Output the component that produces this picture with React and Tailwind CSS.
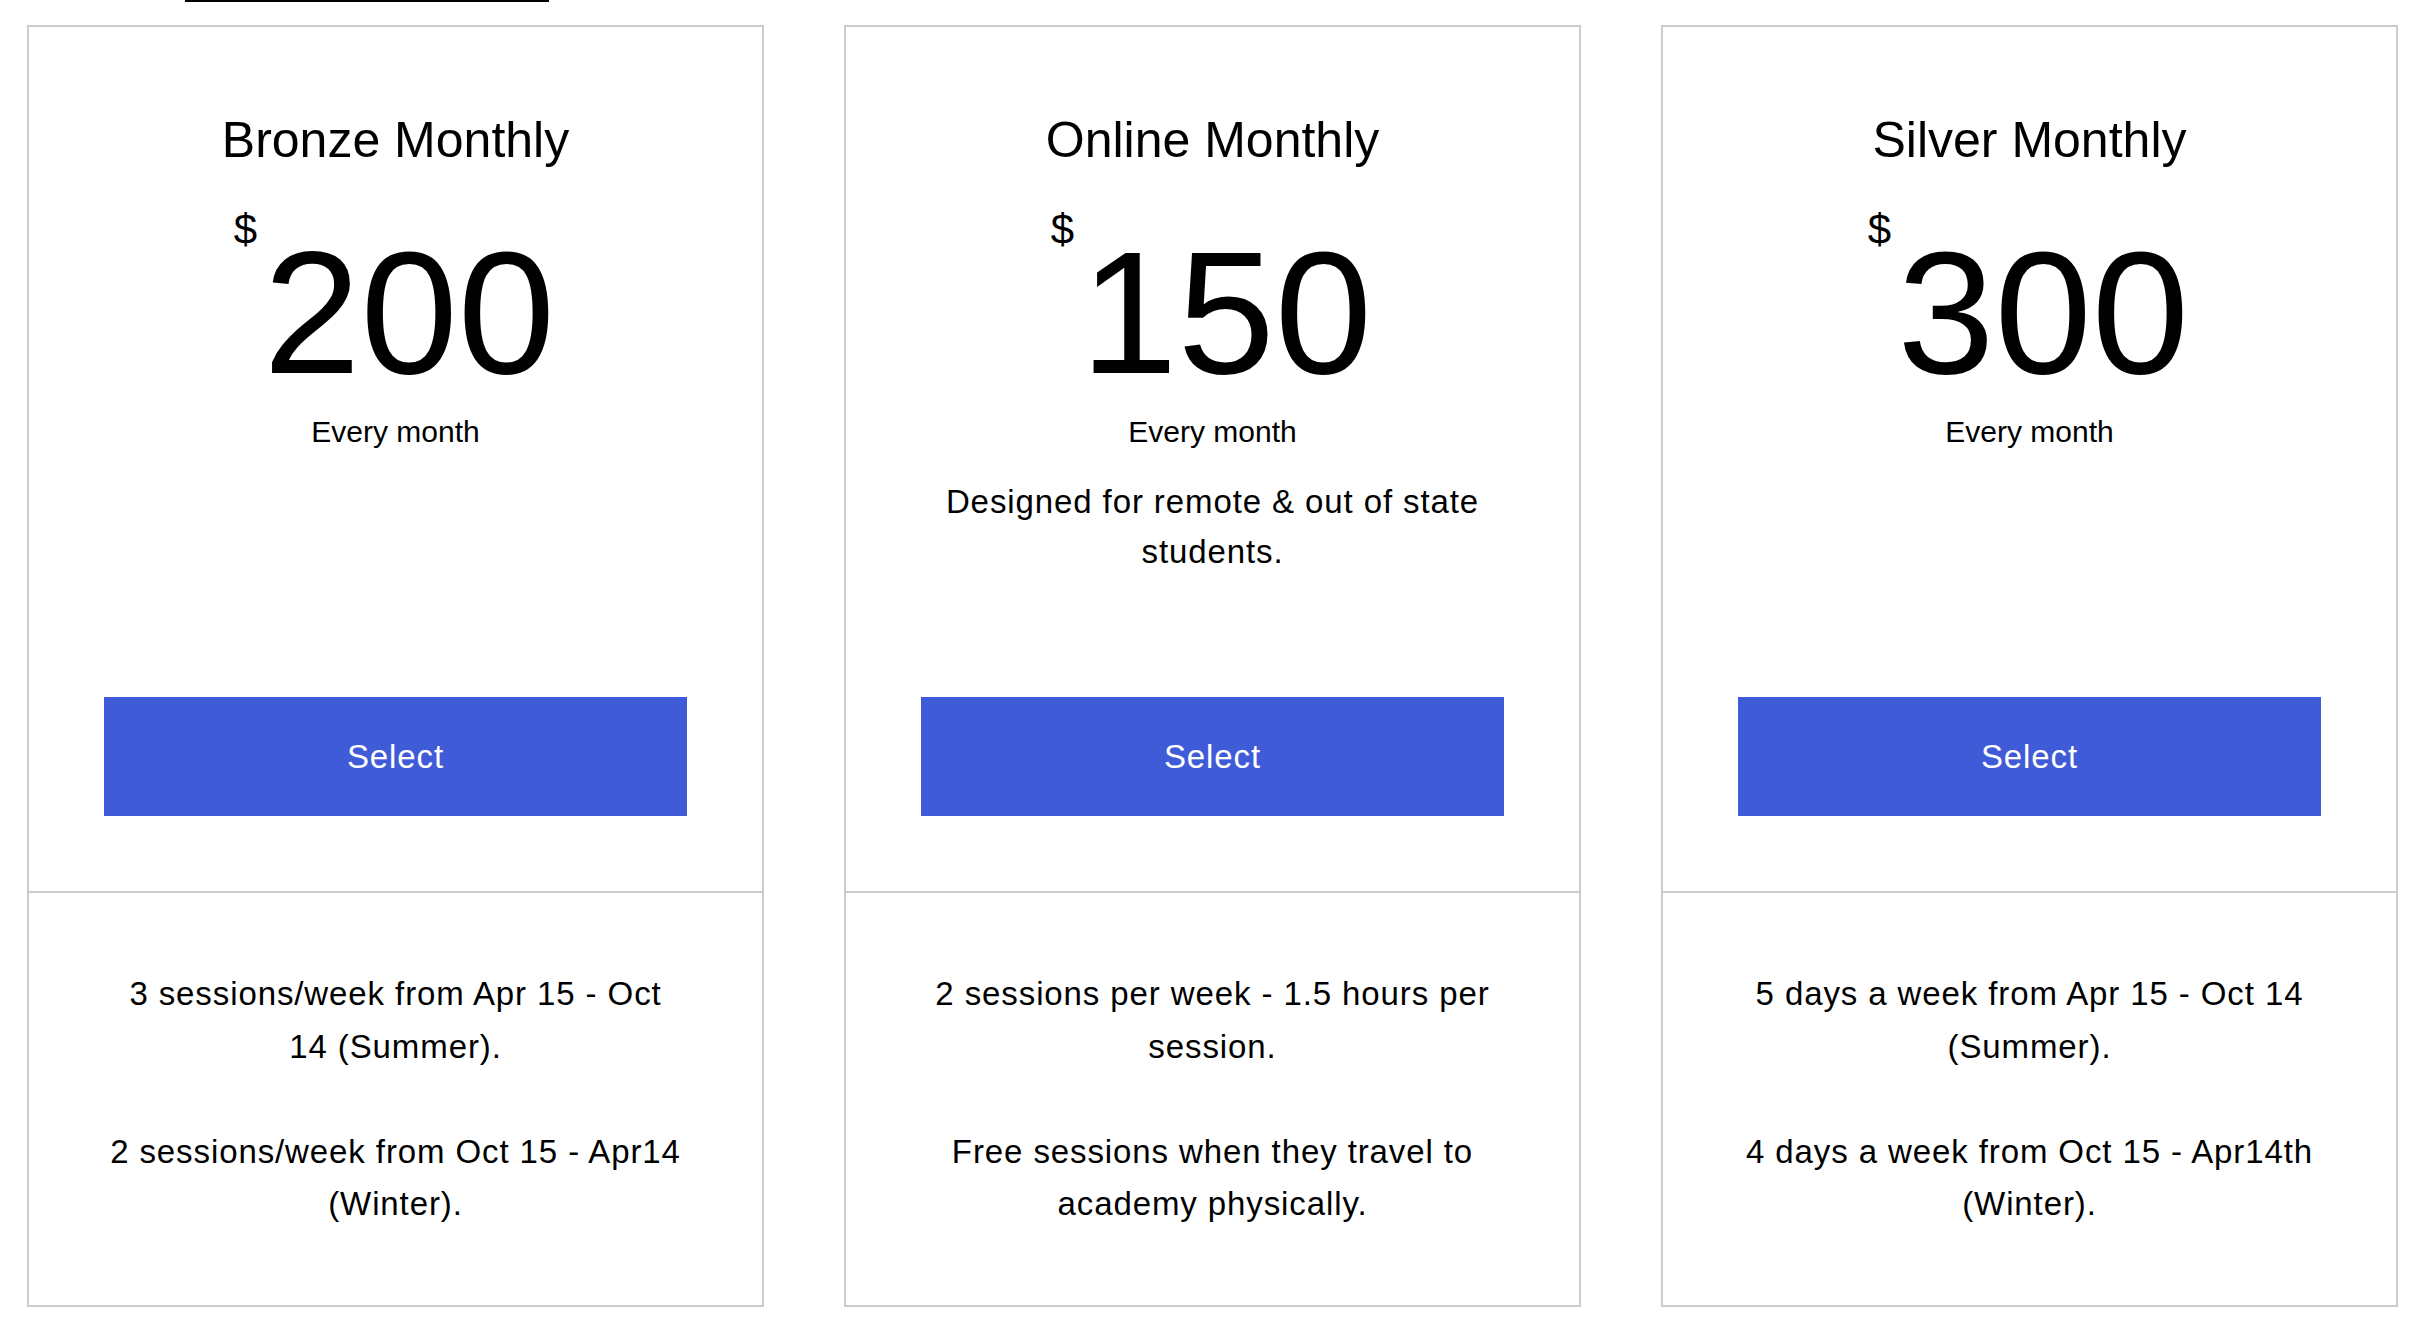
const plans = [
  {
    name: "Bronze Monthly",
    price: "200",
    desc: null,
    paras: [
      ["3 sessions/week from Apr 15 - Oct", "14 (Summer)."],
      ["2 sessions/week from Oct 15 - Apr14", "(Winter)."],
    ],
  },
  {
    name: "Online Monthly",
    price: "150",
    desc: ["Designed for remote & out of state", "students."],
    paras: [
      ["2 sessions per week - 1.5 hours per", "session."],
      ["Free sessions when they travel to", "academy physically."],
    ],
  },
  {
    name: "Silver Monthly",
    price: "300",
    desc: null,
    paras: [
      ["5 days a week from Apr 15 - Oct 14", "(Summer)."],
      ["4 days a week from Oct 15 - Apr14th", "(Winter)."],
    ],
  },
];

function Card({ plan }) {
  return (
    <div className="h-[1282px] border-2 border-[#cccccc] flex flex-col bg-white">
      <div className="h-[866px] border-b-2 border-[#cccccc] flex flex-col items-center pt-[83px]">
        <h2 className="text-[50px] leading-[60px] font-normal text-black whitespace-nowrap">
          {plan.name}
        </h2>
        <div className="mt-[37px] mr-[2px] flex items-start text-black">
          <span className="mt-[2px] text-[42px] leading-[42px]">$</span>
          <span className="ml-[6px] mt-[17.5px] text-[175px] leading-[175px]">
            {plan.price}
          </span>
        </div>
        <p className="mt-[14px] text-[30px] leading-[36px] text-black">Every month</p>
        {plan.desc && (
          <p className="mt-[27.5px] w-[583px] text-center text-[33px] leading-[49.5px] tracking-[0.9px] text-black">
            {plan.desc[0]}
            <br />
            {plan.desc[1]}
          </p>
        )}
        <button className="mt-auto mb-[75px] w-[583px] h-[119px] bg-[#3f5bd8] text-white text-[33px] tracking-[0.9px] flex items-center justify-center">
          Select
        </button>
      </div>
      <div className="flex-1 pt-[75px] flex flex-col items-center">
        <div className="w-[583px] text-center text-[33px] leading-[52.6px] tracking-[0.9px] text-black">
          <p>
            {plan.paras[0][0]}
            <br />
            {plan.paras[0][1]}
          </p>
          <p className="h-[52.6px]"></p>
          <p>
            {plan.paras[1][0]}
            <br />
            {plan.paras[1][1]}
          </p>
        </div>
      </div>
    </div>
  );
}

export default function App() {
  return (
    <div className="w-[2425px] h-[1340px] overflow-hidden bg-white font-['Liberation_Sans',Arial,Helvetica,sans-serif]">
      <div className="ml-[185px] w-[364px] h-[2px] bg-black" />
      <div className="mt-[23px] px-[27px] grid grid-cols-3 gap-[80px]">
        {plans.map((p) => (
          <Card key={p.name} plan={p} />
        ))}
      </div>
    </div>
  );
}
